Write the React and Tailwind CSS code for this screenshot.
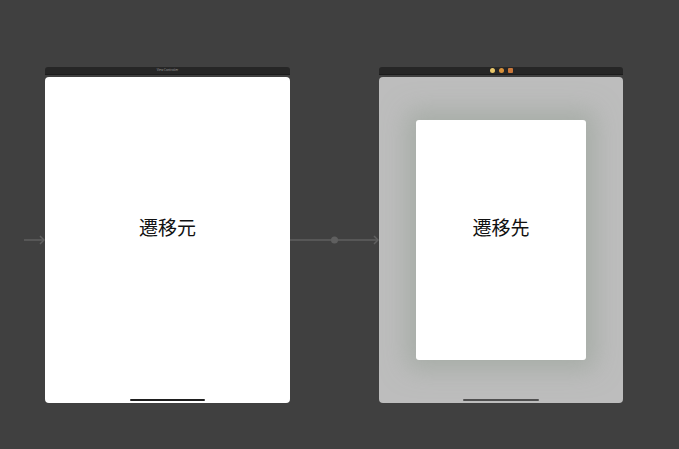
const Arrow = ({ width, dot }) => (
  <svg width={width} height="12" viewBox={`0 0 ${width} 12`} className="block">
    <line x1="0" y1="6" x2={width - 1} y2="6" stroke="#5f5f5f" strokeWidth="1.5" />
    <path d={`M${width - 5} 2 L${width - 1} 6 L${width - 5} 10`} fill="none" stroke="#5f5f5f" strokeWidth="1.5" />
    {dot && <circle cx={width / 2} cy="6" r="3.5" fill="#5f5f5f" />}
  </svg>
);

const SceneHeader = ({ children }) => (
  <div className="h-[8px] rounded-t-[3px] bg-[#262626] flex items-center justify-center gap-[4px] border-b border-[#1c1c1c]">
    {children}
  </div>
);

const App = () => {
  return (
    <div
      className="w-[679px] h-[449px] bg-[#404040] overflow-hidden"
      style={{ fontFamily: '"Noto Sans CJK JP", "Noto Sans", sans-serif' }}
    >
      <div className="flex items-start pl-[24px] pt-[67px]">
        <div className="w-[21px] mt-[167px]">
          <Arrow width={21} />
        </div>

        {/* source scene */}
        <div className="w-[245px] flex flex-col gap-[2px]">
          <SceneHeader>
            <span className="text-[3px] leading-none text-[#9a9a9a]">View Controller</span>
          </SceneHeader>
          <div className="h-[326px] rounded-[4px] bg-white flex flex-col items-center">
            <div className="flex-1 flex items-center justify-center pb-[22px]">
              <span className="text-[19px] text-[#111]">遷移元</span>
            </div>
            <div className="w-[75px] h-[2px] rounded-full bg-[#1f1f1f] mb-[2px]" />
          </div>
        </div>

        <div className="w-[89px] mt-[167px]">
          <Arrow width={89} dot />
        </div>

        {/* destination scene */}
        <div className="w-[244px] flex flex-col gap-[2px]">
          <SceneHeader>
            <span className="w-[5px] h-[5px] rounded-full bg-[#e8c66a]" />
            <span className="w-[5px] h-[5px] rounded-full bg-[#d9913a]" />
            <span className="w-[5px] h-[5px] rounded-[1px] bg-[#c9773a]" />
          </SceneHeader>
          <div className="h-[326px] rounded-[4px] bg-[#bdbdbd] flex flex-col items-center">
            <div className="flex-1 flex items-center justify-center pt-[4px]">
              <div className="w-[170px] h-[240px] rounded-[3px] bg-white shadow-[0_0_24px_10px_rgba(150,160,150,0.55)] flex items-center justify-center pb-[26px]">
                <span className="text-[19px] text-[#111]">遷移先</span>
              </div>
            </div>
            <div className="w-[76px] h-[2px] rounded-full bg-[#4f4f4f] mb-[2px]" />
          </div>
        </div>
      </div>
    </div>
  );
};

export default App;
